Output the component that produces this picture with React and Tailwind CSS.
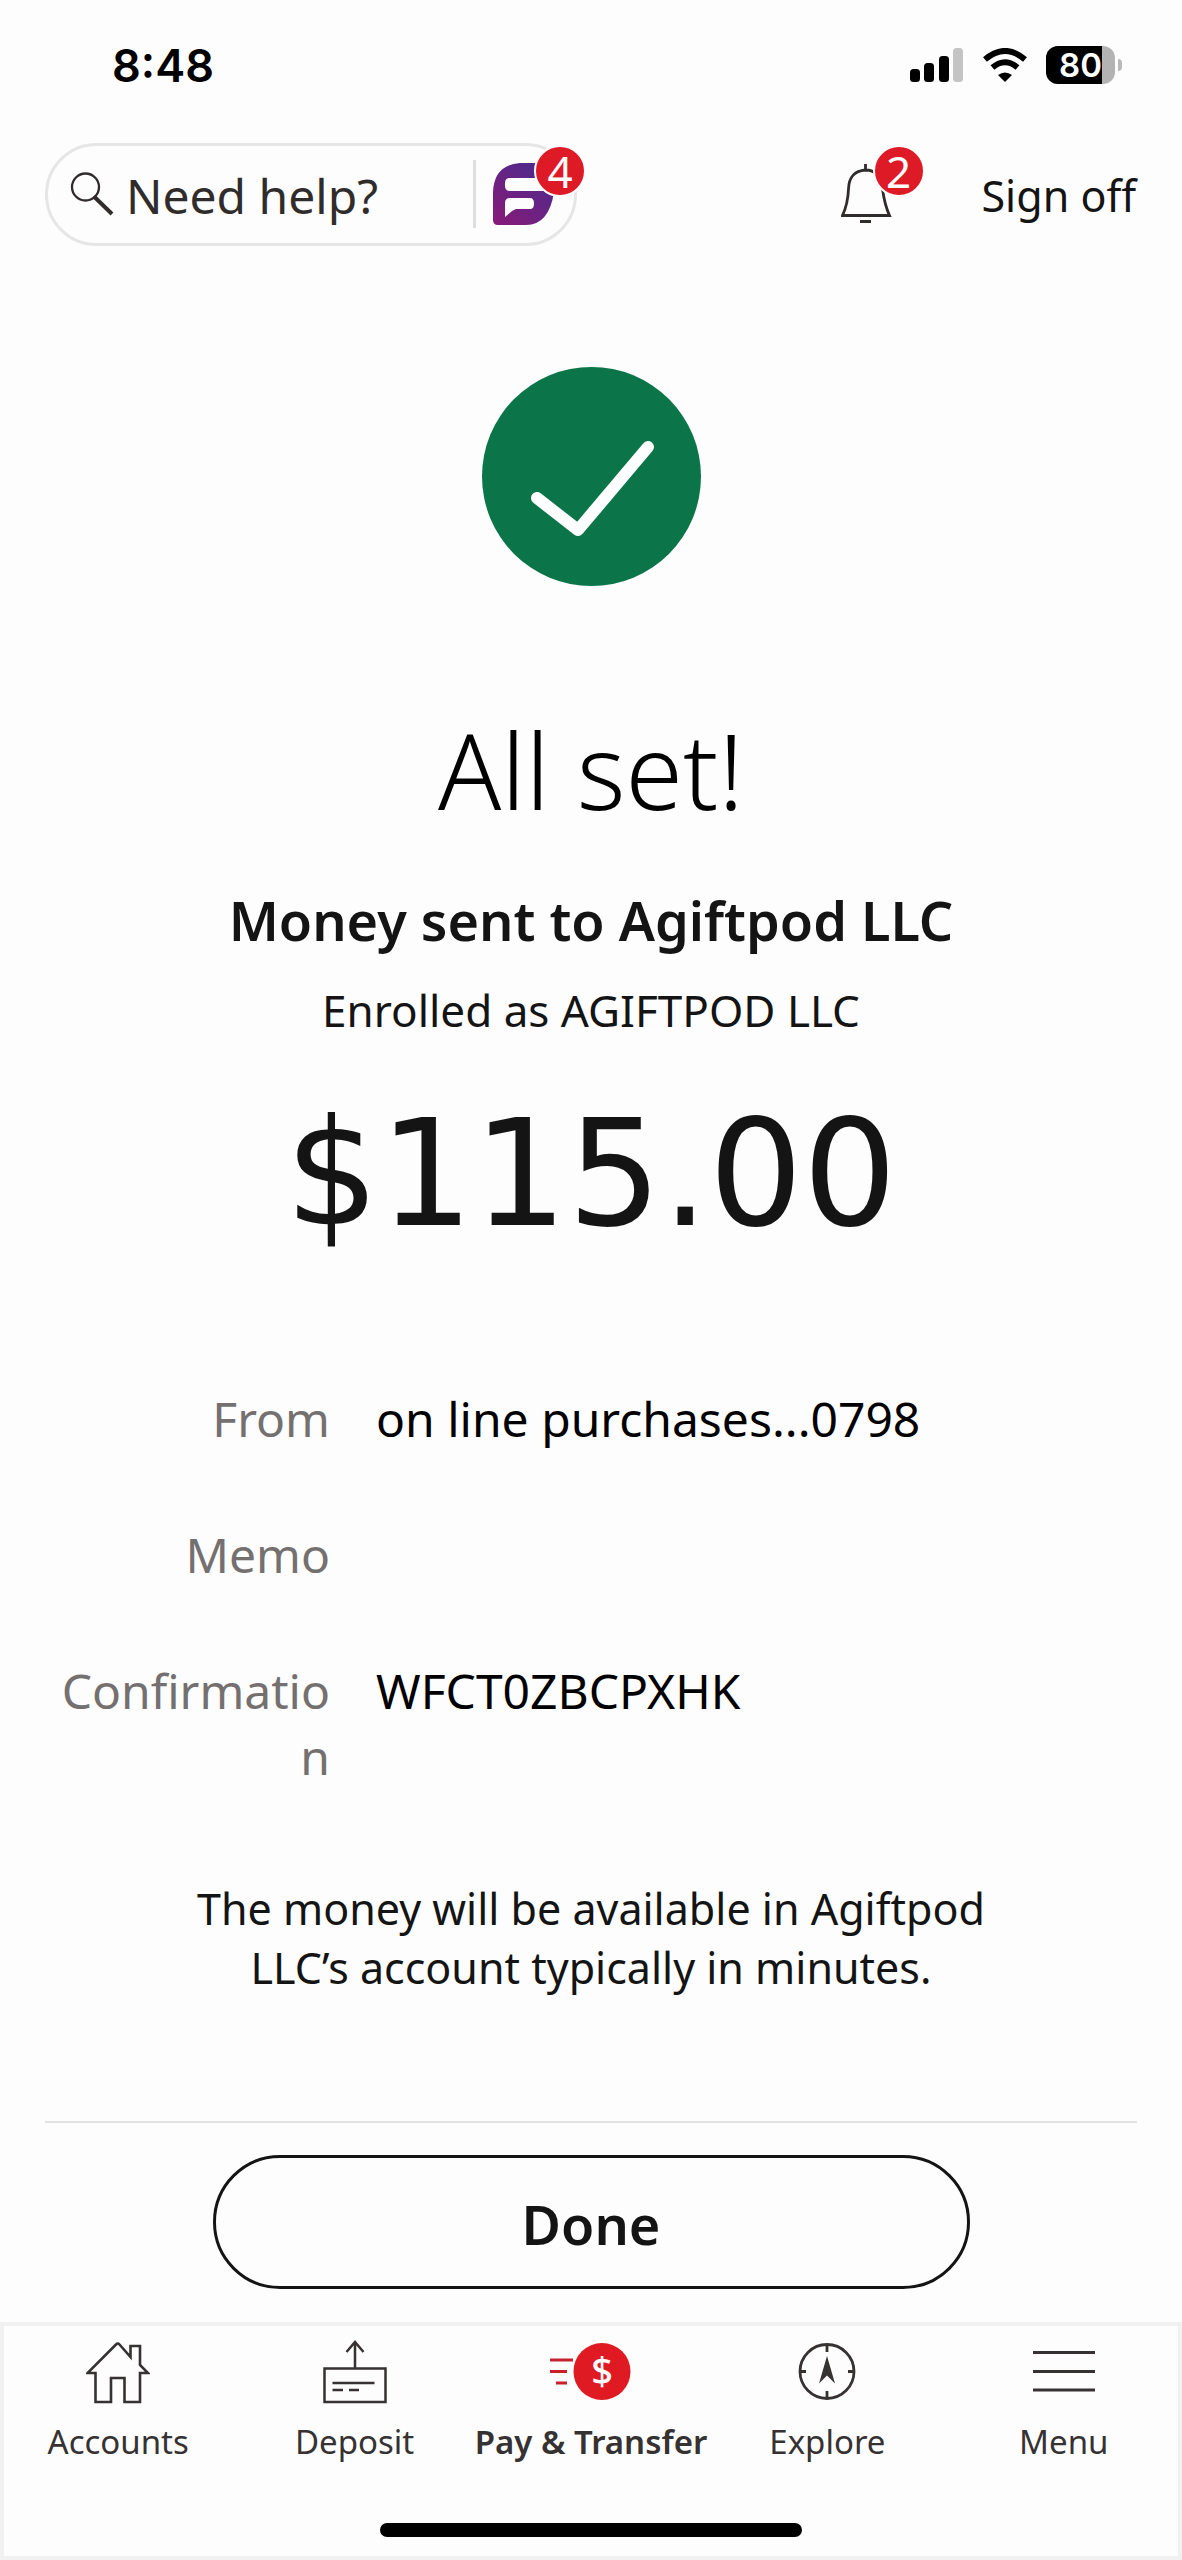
import { useState } from 'react';

const details = [
  { label: 'From', value: 'on line purchases...0798' },
  { label: 'Memo', value: '' },
  { label: 'Confirmation', value: 'WFCT0ZBCPXHK' },
];

function HomeIcon() {
  return (
    <svg width="64" height="64" viewBox="0 0 64 64" fill="none" stroke="currentColor" strokeWidth="2.6">
      <path d="M30 4.5 1.5 33H9.5V62H25V38H38.5V62H54V33H62L54 25V6H44.5V17L33.5 4.5Q31.8 2.6 30 4.5Z" />
    </svg>
  );
}

function DepositIcon() {
  return (
    <svg width="64" height="64" viewBox="0 0 64 64" fill="none" stroke="currentColor" strokeWidth="2.5">
      <rect x="1.5" y="28.5" width="61" height="33.5" />
      <path d="M32 28V2M23.5 12 32 2 40.5 12M9.5 43H51.5M9.5 50H20M26 50H36" />
    </svg>
  );
}

function PayIcon() {
  return (
    <svg width="82" height="64" viewBox="0 0 82 64">
      <path d="M0 20H23M0 31.5H17M6 43H17" stroke="#c8202f" strokeWidth="3" />
      <circle cx="52" cy="31.5" r="28.5" fill="#e01a22" />
      <text x="52" y="45" textAnchor="middle" fontSize="38" fontWeight="500" fill="#fff">
        $
      </text>
    </svg>
  );
}

function ExploreIcon() {
  return (
    <svg width="64" height="64" viewBox="0 0 64 64" fill="none" stroke="currentColor" strokeWidth="2.8">
      <circle cx="32" cy="31.5" r="27" />
      <path d="M32 4.5V12M32 51V58.5M5 31.5H11M53 31.5H59" />
      <path d="M32 16 40 43.5 32 35.5 24 43.5Z" fill="currentColor" stroke="none" />
    </svg>
  );
}

function MenuIcon() {
  return (
    <svg width="64" height="64" viewBox="0 0 64 64" stroke="currentColor" strokeWidth="2.8">
      <path d="M1 12.5H63M1 31.5H63M1 50H63" />
    </svg>
  );
}

const tabs = [
  { name: 'Accounts', Icon: HomeIcon },
  { name: 'Deposit', Icon: DepositIcon },
  { name: 'Pay & Transfer', Icon: PayIcon },
  { name: 'Explore', Icon: ExploreIcon },
  { name: 'Menu', Icon: MenuIcon },
];

function StatusBar() {
  return (
    <div className="flex h-[130px] items-center justify-between pr-[60px] pl-28 text-black">
      <span className="font-[Inter,sans-serif] text-[45px] leading-none font-semibold">8:48</span>
      <div className="flex items-center gap-[18px]">
        <svg width="54" height="34" viewBox="0 0 54 34">
          <rect x="0" y="21" width="10" height="13" rx="3.5" />
          <rect x="14" y="15" width="10" height="19" rx="3.5" />
          <rect x="29" y="8" width="10" height="26" rx="3.5" />
          <rect x="43" y="0" width="10" height="34" rx="3.5" fill="#c4c4c4" />
        </svg>
        <svg width="46" height="34" viewBox="0 0 46 34">
          <path d="M3 11.5Q23-5.5 43 11.5" fill="none" stroke="#000" strokeWidth="6" />
          <path d="M10.5 19.5Q23 9 35.5 19.5" fill="none" stroke="#000" strokeWidth="6" />
          <path d="M16 27Q23 22 30 27L23 34Z" />
        </svg>
        <div className="flex items-center gap-[3px]">
          <div className="flex h-[38px] w-[69px] overflow-hidden rounded-xl bg-[#b3b3b3]">
            <span className="w-14 bg-black text-right font-[Inter,sans-serif] text-[33px] leading-[38px] font-semibold text-white">
              80
            </span>
          </div>
          <span className="h-3 w-1 rounded-r-full bg-[#b9b9b9]" />
        </div>
      </div>
    </div>
  );
}

function Badge({ children }) {
  return (
    <span className="absolute -top-[17px] -right-[30px] flex size-[52px] items-center justify-center rounded-full border-2 border-[#fdfdfd] bg-[#dd1a26] text-[44px] leading-none text-white">
      {children}
    </span>
  );
}

function Header() {
  return (
    <header className="flex h-[116px] items-center pt-3 pr-[46px] pl-[45px]">
      <div className="flex h-[103px] w-[532px] items-center rounded-full border-3 border-[#e6e6e6] pr-[18px] pl-[22px]">
        <label htmlFor="help">
          <svg
            role="img"
            aria-label="Search help"
            width="44"
            height="44"
            viewBox="0 0 44 44"
            fill="none"
            stroke="#302c2c"
          >
            <circle cx="15.5" cy="15" r="13.5" strokeWidth="2.3" />
            <path d="M24.5 25 42 42" strokeWidth="4" />
            <path d="M24 24 27 27" strokeWidth="3" />
          </svg>
        </label>
        <input
          id="help"
          type="text"
          placeholder="Need help?"
          className="ml-3 h-[72px] w-0 grow pt-0.5 text-[48px] leading-[70px] text-[#302c2c] outline-none placeholder:text-[#302c2c]"
        />
        <span className="mr-4 h-[68px] w-[3px] bg-[#dedede]" />
        <button type="button" aria-label="Assistant" className="relative size-16">
          <svg width="64" height="64" viewBox="0 0 64 64">
            <defs>
              <linearGradient id="assistant-fill" x1="0" y1="1" x2="0.8" y2="0">
                <stop offset="0" stopColor="#8a1a78" />
                <stop offset="1" stopColor="#4b2a8c" />
              </linearGradient>
            </defs>
            <path d="M28 1H50L62 30Q57 63 34 63H6Q1 63 1 58V30Q2 3 28 1Z" fill="url(#assistant-fill)" />
            <path
              d="M18 16H64V29H18Q13 29 13 24V21Q13 16 18 16ZM18 36H38Q42 36 42 41.5T38 47H24L20 49 13 55V41Q13 36 18 36Z"
              fill="#fdfdfd"
            />
          </svg>
          <Badge>4</Badge>
        </button>
      </div>
      <button type="button" aria-label="Notifications" className="relative ml-auto h-16 w-[54px]">
        <svg width="54" height="64" viewBox="0 0 54 64" fill="none" stroke="#302c2c" strokeWidth="2.8">
          <path d="M24.5 2V8M24.5 8C13 9 8 15 7.5 27S5 46 1.5 53.5H48.5C45 46 43 38 41.5 27S36 8 24.5 8ZM19 59.5H30" />
        </svg>
        <Badge>2</Badge>
      </button>
      <button type="button" className="ml-[87px] pt-1 text-[43px] leading-[60px] text-[#141414]">
        Sign off
      </button>
    </header>
  );
}

function TabBar({ active, onSelect }) {
  return (
    <nav className="mt-auto border-4 border-[#f1f1f1] pt-3.5 pb-[19px]">
      <div className="-mx-1 grid grid-cols-5">
        {tabs.map(({ name, Icon }) => (
          <button
            key={name}
            type="button"
            onClick={() => onSelect(name)}
            className={`flex flex-col items-center gap-3.5 text-[33px] leading-[48px] whitespace-nowrap text-[#363232] ${
              name === active ? 'font-semibold' : ''
            }`}
          >
            <Icon />
            {name}
          </button>
        ))}
      </div>
      <div className="mx-auto mt-[57px] h-3.5 w-[422px] rounded-full bg-black" />
    </nav>
  );
}

export default function App() {
  const [active, setActive] = useState('Pay & Transfer');

  return (
    <div className="flex min-h-screen flex-col bg-[#fdfdfd] font-['Noto_Sans',sans-serif] text-[#141414]">
      <StatusBar />
      <Header />

      <main className="flex flex-col items-center text-center">
        <svg className="mt-[121px]" width="219" height="219" viewBox="0 0 219 219" fill="none">
          <circle cx="109.5" cy="109.5" r="109.5" fill="#0b7549" />
          <path d="M55 131 96 163 166 80" stroke="#fff" strokeWidth="12" strokeLinecap="round" strokeLinejoin="round" />
        </svg>
        <h1 className="mt-[114px] text-[104px] leading-[140px] font-light text-black">All set!</h1>
        <h2 className="mt-11 text-[54px] leading-[72px] font-semibold">Money sent to Agiftpod LLC</h2>
        <p className="mt-6 text-[44px] leading-[60px]">Enrolled as AGIFTPOD LLC</p>
        <p className="mt-12 font-['DejaVu_Sans',sans-serif] text-[148px] leading-[172px]">$115.00</p>
      </main>

      <dl className="mt-[126px] flex flex-col gap-[70px] text-[48px] leading-[66px]">
        {details.map(({ label, value }) => (
          <div key={label} className="grid grid-cols-[285px_1fr] gap-[46px] pl-[45px]">
            <dt className="text-right break-all text-[#747070]">{label}</dt>
            <dd className="text-black">{value}</dd>
          </div>
        ))}
      </dl>

      <p className="mx-auto mt-[89px] w-[820px] text-center text-[43px] leading-[59px]">
        The money will be available in Agiftpod LLC’s account typically in minutes.
      </p>

      <div className="mx-[45px] mt-[124px] flex justify-center border-t-2 border-[#e2e2e2] pt-8 pb-8">
        <button
          type="button"
          className="h-[134px] w-[757px] rounded-full border-3 border-[#141414] pt-1 text-[54px] font-semibold"
        >
          Done
        </button>
      </div>

      <TabBar active={active} onSelect={setActive} />
    </div>
  );
}
